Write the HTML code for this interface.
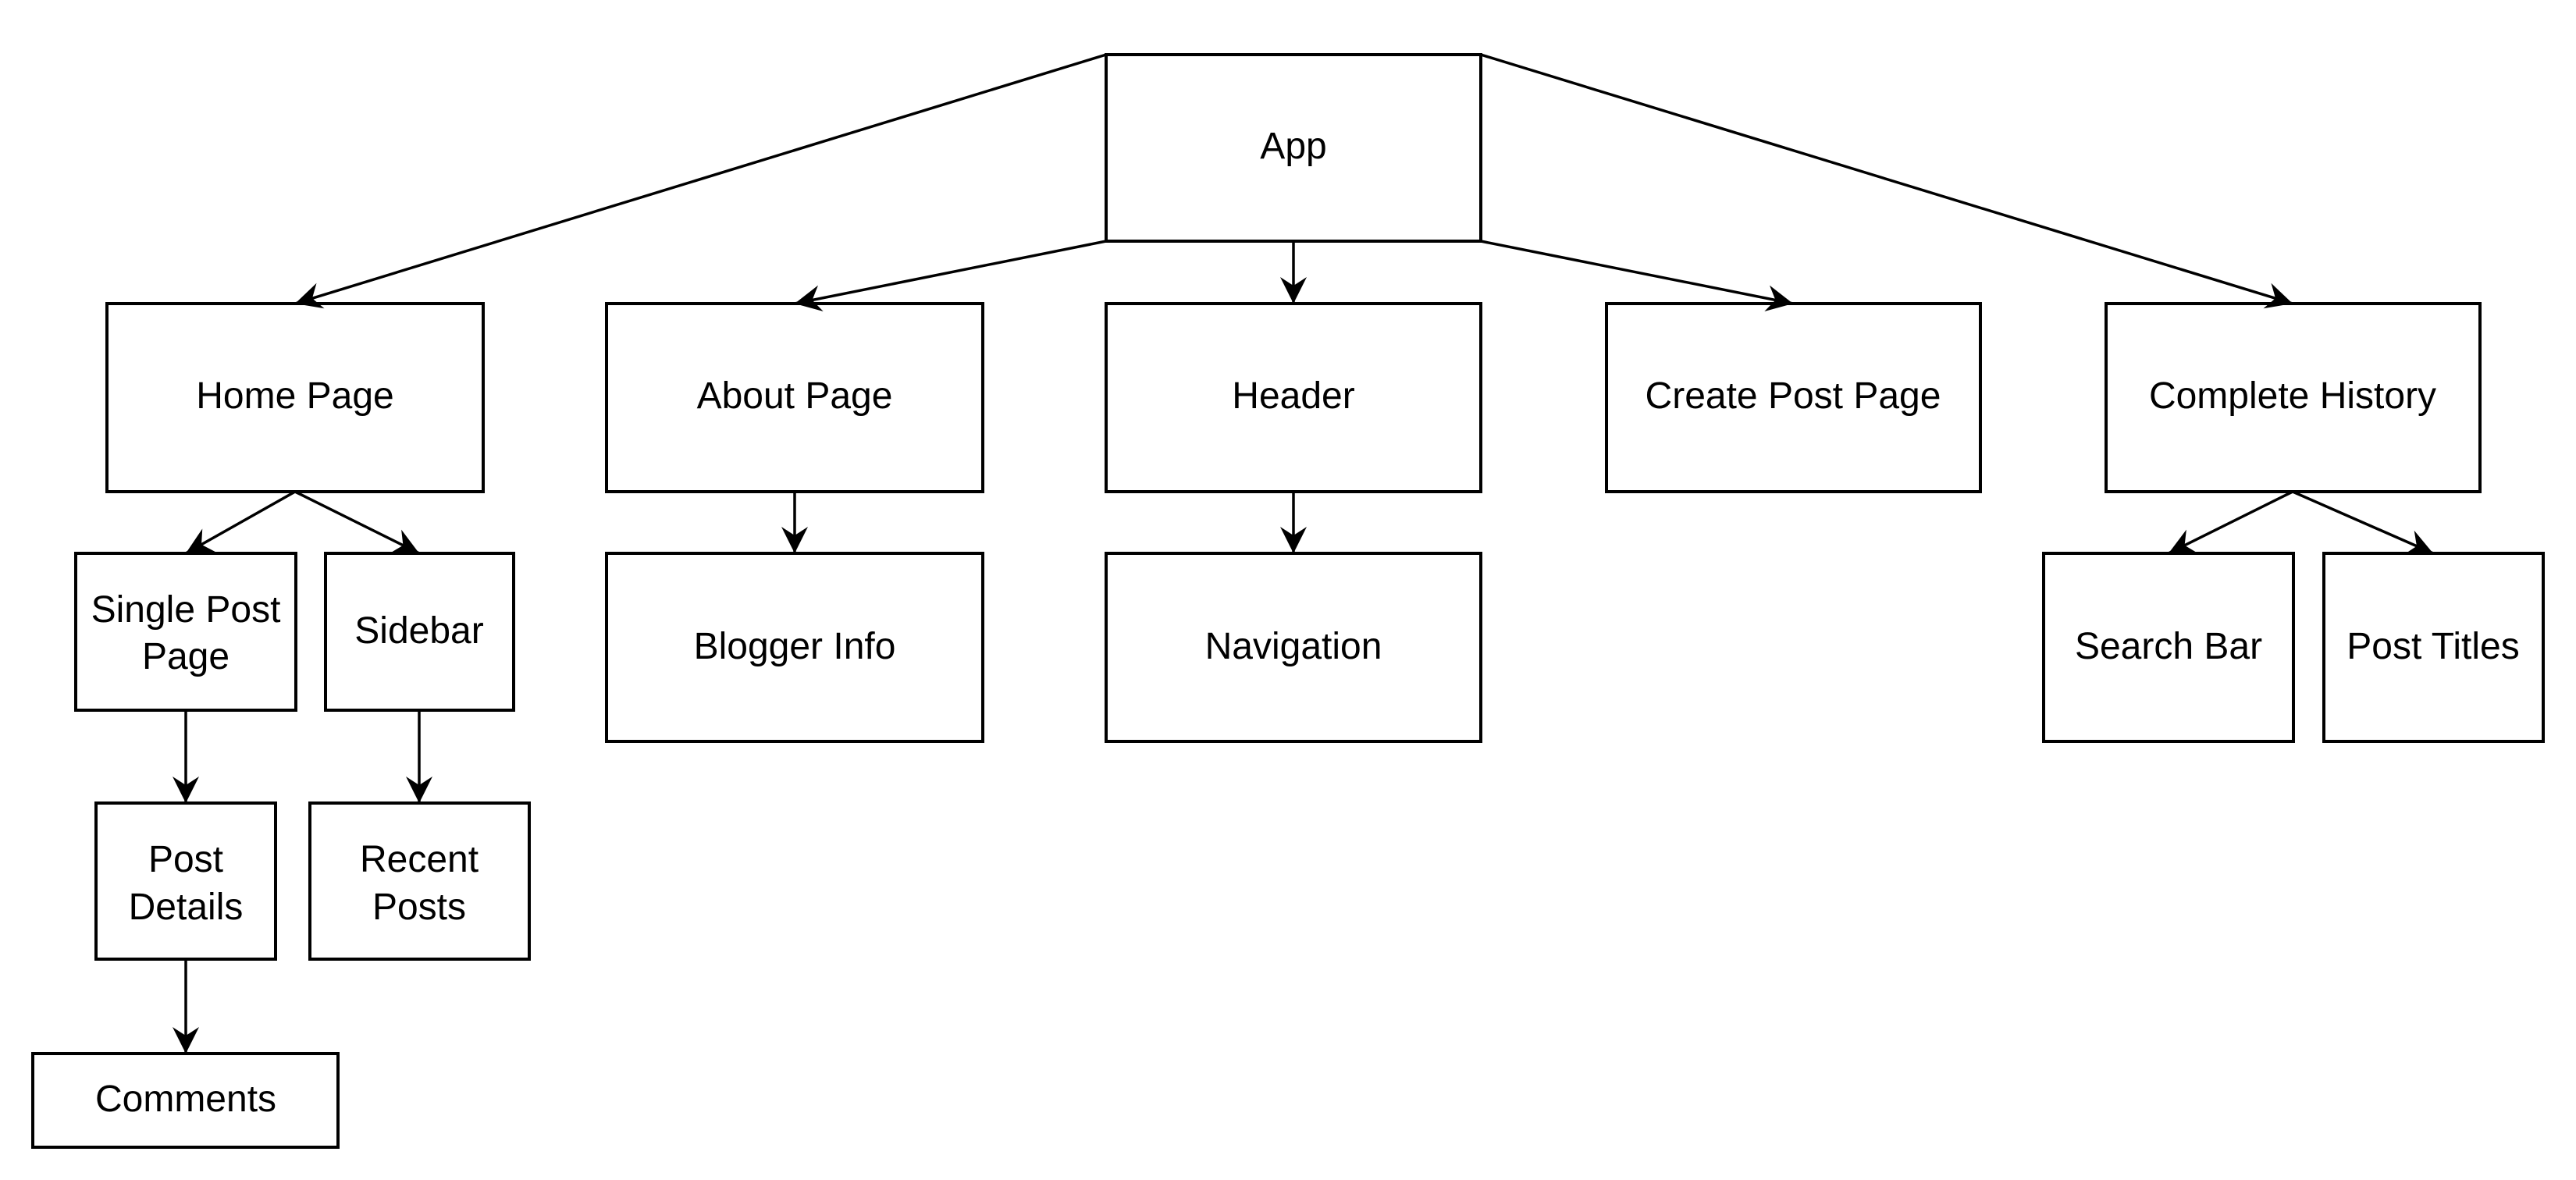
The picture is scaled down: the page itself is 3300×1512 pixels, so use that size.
<!DOCTYPE html>
<html><head><meta charset="utf-8"><style>
html,body{margin:0;padding:0;background:#fff;width:3300px;height:1512px;overflow:hidden}
svg text{font-family:"Liberation Sans",Arial,sans-serif;font-size:48px;fill:#000}
</style></head><body>
<svg width="3300" height="1512" viewBox="0 0 3300 1512" xmlns="http://www.w3.org/2000/svg">
<defs>
<marker id="a" markerUnits="userSpaceOnUse" markerWidth="40" markerHeight="40" viewBox="-36 -20 40 40" refX="0" refY="0" orient="auto">
<path d="M0,0 L-34,-17 L-23,0 L-34,17 Z" fill="#000"/>
</marker>
</defs>
<g fill="#fff" stroke="#000" stroke-width="4">
<rect x="1417" y="70" width="480" height="239"/>
<rect x="137" y="389" width="482" height="241"/>
<rect x="777" y="389" width="482" height="241"/>
<rect x="1417" y="389" width="480" height="241"/>
<rect x="2058" y="389" width="479" height="241"/>
<rect x="2698" y="389" width="479" height="241"/>
<rect x="97" y="709" width="282" height="201"/>
<rect x="417" y="709" width="241" height="201"/>
<rect x="777" y="709" width="482" height="241"/>
<rect x="1417" y="709" width="480" height="241"/>
<rect x="2618" y="709" width="320" height="241"/>
<rect x="2977" y="709" width="281" height="241"/>
<rect x="123" y="1029" width="230" height="200"/>
<rect x="397" y="1029" width="281" height="200"/>
<rect x="42" y="1350" width="391" height="120"/>
</g>
<g stroke="#000" stroke-width="3.5" fill="none" marker-end="url(#a)">
<line x1="1417" y1="70" x2="378" y2="389"/>
<line x1="1417" y1="309" x2="1018" y2="389"/>
<line x1="1657" y1="309" x2="1657" y2="389"/>
<line x1="1897" y1="309" x2="2297" y2="389"/>
<line x1="1897" y1="70" x2="2937" y2="389"/>
<line x1="378" y1="630" x2="238" y2="709"/>
<line x1="378" y1="630" x2="537" y2="709"/>
<line x1="1018" y1="630" x2="1018" y2="709"/>
<line x1="1657" y1="630" x2="1657" y2="709"/>
<line x1="2937" y1="630" x2="2778" y2="709"/>
<line x1="2937" y1="630" x2="3117" y2="709"/>
<line x1="238" y1="910" x2="238" y2="1029"/>
<line x1="537" y1="910" x2="537" y2="1029"/>
<line x1="238" y1="1229" x2="238" y2="1350"/>
</g>
<g text-anchor="middle">
<text x="1657" y="203">App</text>
<text x="378" y="523">Home Page</text>
<text x="1018" y="523">About Page</text>
<text x="1657" y="523">Header</text>
<text x="2297" y="523">Create Post Page</text>
<text x="2937" y="523">Complete History</text>
<text x="238" y="797">Single Post</text>
<text x="238" y="857">Page</text>
<text x="537" y="824">Sidebar</text>
<text x="1018" y="844">Blogger Info</text>
<text x="1657" y="844">Navigation</text>
<text x="2778" y="844">Search Bar</text>
<text x="3117" y="844">Post Titles</text>
<text x="238" y="1117">Post</text>
<text x="238" y="1178">Details</text>
<text x="537" y="1117">Recent</text>
<text x="537" y="1178">Posts</text>
<text x="238" y="1424">Comments</text>
</g>
</svg>
</body></html>
